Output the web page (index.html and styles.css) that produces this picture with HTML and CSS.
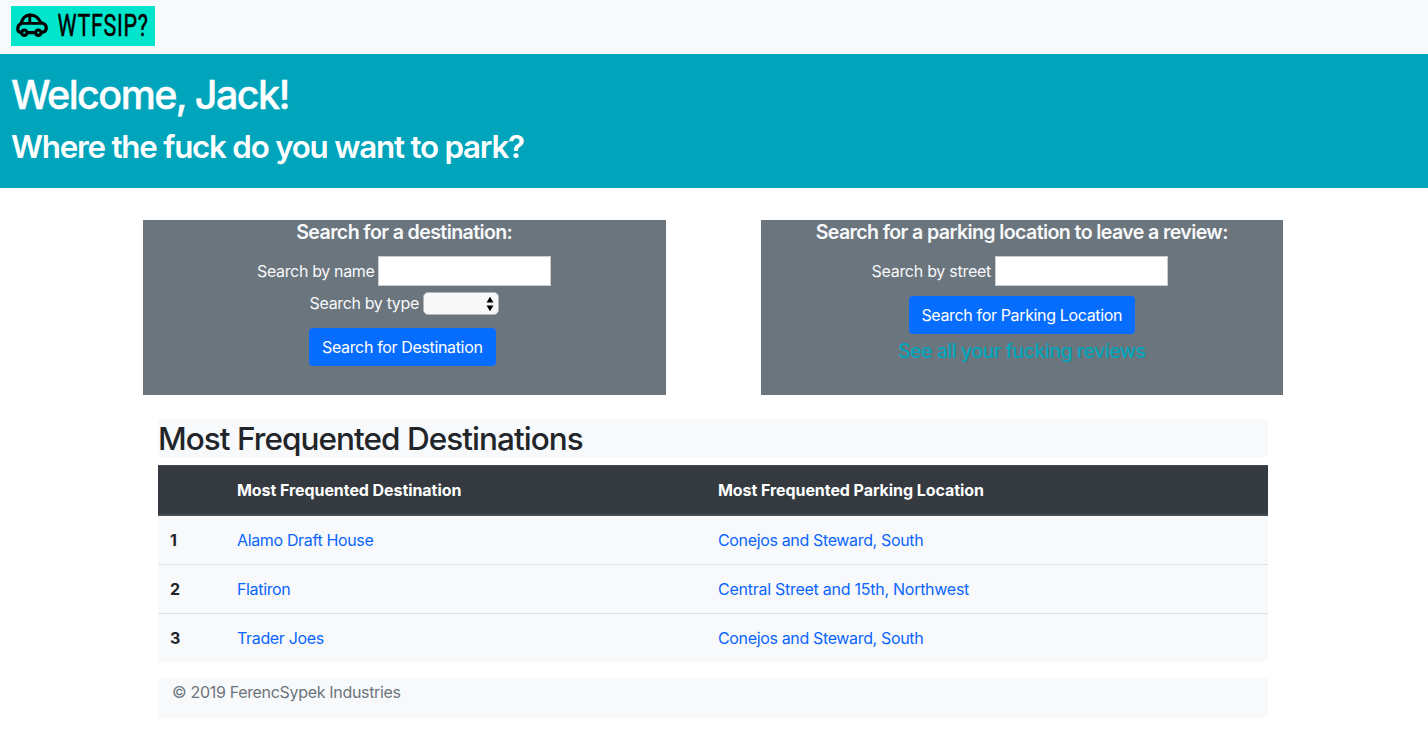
FILE: index.html
```html
<!DOCTYPE html>
<html lang="en">
<head>
<meta charset="utf-8">
<title>WTFSIP?</title>
<link rel="stylesheet" href="styles.css">
</head>
<body>
<nav class="navbar">
  <a class="brand" href="#">
    <svg class="logo" width="144" height="40" viewBox="0 0 144 40">
      <g fill="none" stroke="#000" stroke-width="3.2" stroke-linejoin="round" stroke-linecap="round">
        <path d="M9 26.2C7.2 26 6.8 24.8 6.8 22.8C6.8 20 7.8 18.4 10 17.7C11.7 11.5 14 9.1 19 9.1C24.3 9.1 27 11 29.7 16.5C33.7 17.5 35.3 19.4 35.3 21.8C35.3 24.8 34 26 31.5 26.2M17.2 26.6H23.4"/>
        <path d="M10 17.3H30M18.8 9V17" stroke-width="2.8"/>
        <circle cx="13.3" cy="26.7" r="2.7"/>
        <circle cx="27.3" cy="26.7" r="2.7"/>
      </g>
      <text class="logo-text" x="46.5" y="30" textLength="91" lengthAdjust="spacingAndGlyphs">WTFSIP?</text>
    </svg>
  </a>
</nav>
<header class="banner">
  <h1 class="welcome">Welcome, Jack!</h1>
  <h2 class="question">Where the fuck do you want to park?</h2>
</header>
<section class="searches">
  <form class="panel">
    <h5 class="panel-title">Search for a destination:</h5>
    <div class="field"><label for="name">Search by name</label><input class="input" id="name" type="text"></div>
    <div class="field field-type"><label class="label-type">Search by type</label><span class="select" role="listbox"><svg width="8" height="16" viewBox="0 0 8 16"><path d="M.5 6.5L4 .8L7.5 6.5ZM.5 9.5L4 15.2L7.5 9.5Z"/></svg></span></div>
    <button class="button button-destination" type="button">Search for Destination</button>
  </form>
  <form class="panel">
    <h5 class="panel-title">Search for a parking location to leave a review:</h5>
    <div class="field field-street"><label class="label-street" for="street">Search by street</label><input class="input" id="street" type="text"></div>
    <button class="button button-parking" type="button">Search for Parking Location</button>
    <a class="reviews" href="#">See all your fucking reviews</a>
  </form>
</section>
<main class="container">
  <h2 class="heading">Most Frequented Destinations</h2>
  <table class="table">
    <thead><tr><th class="col-rank"></th><th class="col-dest">Most Frequented Destination</th><th>Most Frequented Parking Location</th></tr></thead>
    <tbody>
      <tr><th>1</th><td><a href="#">Alamo Draft House</a></td><td><a href="#">Conejos and Steward, South</a></td></tr>
      <tr><th>2</th><td><a href="#">Flatiron</a></td><td><a class="wide" href="#">Central Street and 15th, Northwest</a></td></tr>
      <tr><th>3</th><td><a href="#">Trader Joes</a></td><td><a href="#">Conejos and Steward, South</a></td></tr>
    </tbody>
  </table>
  <footer class="footer">© 2019 FerencSypek Industries</footer>
</main>
</body>
</html>
```
FILE: styles.css
```css
* { box-sizing: border-box; }
body { margin: 0; background: #fff; color: #212529; font: 400 16px/24px Inter, "Liberation Sans", sans-serif; letter-spacing: -0.35px; }
h1, h2, h5 { margin: 0; font-weight: 500; white-space: nowrap; }
a { color: #0a66ff; text-decoration: none; }
.navbar { height: 54px; padding: 6px 11px; background: #f8f9fb; }
.brand, .logo { display: block; }
.logo { background: #00e5cb; overflow: visible; }
.logo-text { font: 400 31px Roboto, sans-serif; letter-spacing: 1px; stroke: #000; stroke-width: .5px; }
.banner { height: 134px; padding: 17px 11px 15px; background: #00a5bc; color: #fff; }
.welcome { font-size: 39.5px; line-height: 48px; letter-spacing: -1.56px; margin-bottom: 8px; -webkit-text-stroke: .4px #fff; }
.question { font-size: 31.3px; line-height: 40px; font-weight: 600; letter-spacing: -1.22px; }
.panel-title { font-size: 19.6px; line-height: 24px; font-weight: 600; letter-spacing: -.62px; margin-bottom: 12px; }
.searches { display: flex; justify-content: space-between; width: 1140px; margin: 32px 0 0 143px; }
.panel { display: flex; flex-direction: column; align-items: center; width: 522.5px; height: 175px; background: #6b757d; color: #f8f9fb; }
.field { display: flex; align-items: center; gap: 4px; height: 30px; white-space: nowrap; }
.field-type { height: 23px; margin: 6px 0 13px; }
.label-type { margin-top: -1px; }
.field-street { margin-bottom: 10px; padding-right: 4px; }
.label-street { letter-spacing: -.27px; }
.input { width: 173px; height: 30px; margin: 0; padding: 1px; border: 1px solid #ccc; background: #fff; }
.select { display: flex; align-items: center; justify-content: flex-end; width: 76px; height: 23px; padding-right: 4px; border: 1px solid #b5b5b5; border-radius: 5px; background: #f8f8f8; }
.button { height: 38px; padding: 0; border: 0; border-radius: 4px; background: #076dff; color: #fff; font: inherit; letter-spacing: inherit; white-space: nowrap; flex: none; }
.button-destination { width: 187px; margin-right: 4px; }
.button-parking { width: 226px; }
.reviews { margin-top: 5px; color: #00a5bc; font-size: 19.6px; font-weight: 500; letter-spacing: -.53px; }
.container { width: 1110px; margin: 24px 0 0 158px; }
.heading { height: 38px; margin-bottom: 8px; background: #f8f9fb; font-size: 31.5px; line-height: 40px; letter-spacing: -.96px; }
.table { width: 1110px; border-spacing: 0; table-layout: fixed; background: #f8f9fb; text-align: left; }
.table th, .table td { height: 49px; padding: 0 12px; border-top: 1px solid #dee2e6; }
.table th { font-weight: 700; }
.table thead th { height: 51px; background: #343a40; color: #fff; border-top: 1px solid #454d55; border-bottom: 2px solid #454d55; letter-spacing: -.07px; }
.table tbody tr:first-child > * { height: 48px; border-top: 0; }
.col-rank { width: 67px; }
.col-dest { width: 481px; }
.wide { letter-spacing: -.26px; }
.footer { height: 40px; margin-top: 16px; padding: 2px 14px; background: #f8f9fb; color: #6c757d; letter-spacing: -.32px; }
```
